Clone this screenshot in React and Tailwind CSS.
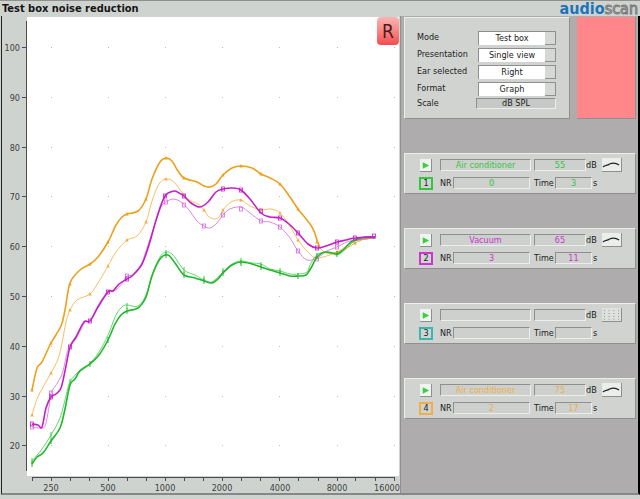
import React, { useState } from 'react';

// --- Chart data (x, y pairs on the plot) ---

const ticksX = [32, 51, 70, 89, 108, 127, 146, 165, 184, 203, 222, 241, 260, 279, 298, 318, 337, 355, 375, 394];
const labelsX = [[51, '250'], [108, '500'], [165, '1000'], [222, '2000'], [280, '4000'], [337, '8000'], [387, '16000']];
const labelsY = [[47, '100'], [97, '90'], [147, '80'], [196, '70'], [246, '60'], [296, '50'], [346, '40'], [396, '30'], [445, '20']];

const curves = [
  {
    name: 'orange-thin', color: '#f2ae3c', width: 1, marker: 'dot',
    points: [[32, 415], [37, 399], [42, 389], [51, 373], [58, 359], [62, 343], [66, 322], [70, 310], [77, 300], [90, 294], [98, 283], [108, 266], [116, 252], [127, 240], [137, 236], [146, 222], [152, 201], [159, 184], [166, 179], [174, 182], [184, 195], [191, 201], [198, 204], [204, 210], [208, 216], [214, 219], [219, 217], [223, 210], [231, 202], [241, 200], [250, 206], [261, 210], [271, 209], [280, 213], [290, 226], [298, 240], [308, 252], [317, 258], [337, 252], [355, 241], [375, 238]],
    marks: [[32, 415], [51, 373], [70, 310], [90, 294], [108, 266], [127, 240], [146, 222], [166, 179], [184, 195], [204, 210], [223, 210], [241, 200], [261, 210], [280, 213], [298, 240], [317, 258], [337, 252]],
  },
  {
    name: 'green-thin', color: '#3ccb4a', width: 1, marker: 'tick',
    points: [[32, 461], [42, 449], [51, 435], [60, 418], [66, 396], [70, 382], [80, 370], [90, 363], [99, 352], [108, 335], [116, 315], [122, 307], [127, 305], [138, 306], [146, 295], [152, 275], [160, 257], [166, 252], [173, 255], [184, 270], [195, 275], [204, 280], [212, 282], [223, 272], [232, 264], [241, 261], [252, 263], [261, 264], [270, 269], [280, 271], [290, 274], [298, 274], [307, 272], [311, 263], [318, 254], [330, 252], [337, 255], [346, 249], [355, 241], [375, 238]],
    marks: [[32, 461], [51, 435], [70, 382], [127, 306], [166, 253], [184, 270], [204, 279], [223, 271], [241, 261], [261, 265], [280, 271]],
  },
  {
    name: 'magenta-thin', color: '#d36adb', width: 1, marker: 'box',
    points: [[32, 427], [40, 428], [45, 426], [49, 407], [51, 393], [58, 382], [63, 371], [67, 353], [70, 347], [77, 337], [85, 322], [90, 321], [99, 304], [108, 291], [114, 291], [120, 286], [127, 276], [133, 275], [141, 265], [146, 251], [154, 227], [161, 207], [166, 202], [173, 199], [181, 202], [189, 210], [197, 221], [204, 226], [210, 228], [217, 223], [223, 215], [230, 209], [241, 207], [250, 213], [261, 221], [270, 222], [280, 227], [290, 238], [298, 251], [307, 260], [317, 258], [327, 251], [337, 247], [347, 242], [355, 240], [375, 238]],
    marks: [[32, 427], [51, 393], [127, 276], [166, 202], [184, 205], [204, 226], [223, 215], [241, 209], [261, 221], [280, 227], [298, 251], [317, 259], [337, 247]],
  },
  {
    name: 'orange', color: '#eda01c', width: 2, marker: 'dot',
    points: [[32, 390], [37, 368], [42, 362], [51, 343], [61, 326], [65, 310], [70, 283], [80, 270], [90, 264], [98, 257], [108, 242], [116, 225], [122, 217], [127, 214], [138, 211], [146, 199], [152, 179], [160, 162], [166, 158], [172, 161], [178, 171], [184, 178], [197, 182], [204, 186], [210, 187], [216, 184], [223, 175], [232, 168], [241, 166], [252, 168], [261, 174], [270, 178], [280, 184], [290, 197], [298, 209], [312, 227], [317, 240], [320, 248]],
    marks: [[32, 390], [51, 343], [70, 284], [90, 264], [108, 242], [127, 214], [146, 199], [166, 158], [184, 178], [223, 175], [241, 166], [261, 174], [280, 184], [298, 209], [317, 242]],
  },
  {
    name: 'orange-tail', color: '#eda01c', width: 1, marker: 'dot',
    points: [[320, 248], [326, 253], [337, 252], [347, 248], [355, 243], [365, 239], [375, 238]],
    marks: [[337, 253], [355, 243]],
  },
  {
    name: 'green', color: '#22b62d', width: 2, marker: 'tick',
    points: [[32, 464], [37, 457], [43, 453], [51, 441], [60, 428], [65, 409], [70, 385], [75, 379], [80, 371], [90, 364], [99, 355], [108, 340], [115, 324], [121, 315], [127, 311], [138, 308], [146, 297], [152, 276], [160, 259], [168, 255], [175, 263], [184, 275], [195, 278], [204, 281], [212, 283], [218, 279], [223, 273], [232, 265], [241, 262], [252, 264], [261, 267], [270, 270], [280, 273], [290, 276], [298, 276], [306, 275], [311, 268], [317, 257], [325, 252], [337, 254], [344, 249], [351, 242], [358, 239], [365, 237], [375, 237]],
    marks: [[32, 464], [51, 441], [90, 364], [108, 340], [127, 311], [166, 255], [184, 275], [204, 281], [223, 273], [241, 263], [261, 267], [280, 273], [298, 276], [317, 256], [337, 254]],
  },
  {
    name: 'magenta', color: '#c31fc9', width: 2, marker: 'box',
    points: [[32, 424], [38, 425], [42, 427], [46, 408], [51, 397], [56, 394], [61, 388], [65, 371], [70, 347], [76, 337], [84, 322], [90, 321], [98, 307], [108, 292], [113, 291], [119, 284], [127, 279], [133, 275], [142, 264], [149, 245], [157, 217], [165, 196], [174, 191], [179, 193], [184, 196], [191, 203], [200, 207], [208, 202], [216, 192], [223, 189], [233, 188], [241, 190], [250, 199], [261, 213], [270, 217], [280, 218], [289, 224], [298, 233], [308, 244], [317, 248], [326, 246], [337, 242], [346, 240], [355, 238], [375, 237]],
    marks: [[32, 424], [51, 397], [70, 347], [90, 321], [108, 292], [127, 279], [165, 196], [184, 196], [223, 189], [241, 190], [261, 211], [280, 218], [298, 233], [317, 248], [337, 242], [355, 238], [374, 236]],
  },
];

// Catmull-Rom spline through the measured points
const smooth = (pts) => {
  let d = `M${pts[0][0]} ${pts[0][1]}`;
  for (let i = 0; i < pts.length - 1; i++) {
    const p0 = pts[i - 1] || pts[i];
    const p1 = pts[i];
    const p2 = pts[i + 1];
    const p3 = pts[i + 2] || p2;
    d += ` C${p1[0] + (p2[0] - p0[0]) / 6} ${p1[1] + (p2[1] - p0[1]) / 6} ${p2[0] - (p3[0] - p1[0]) / 6} ${p2[1] - (p3[1] - p1[1]) / 6} ${p2[0]} ${p2[1]}`;
  }
  return d;
};

const Marker = ({ type, x, y, color }) => {
  if (type === 'tick') return <path d={`M${x} ${y - 3}v6`} stroke={color} strokeWidth="1" />;
  if (type === 'box') return <rect x={x - 1.5} y={y - 2} width="3" height="4" fill="none" stroke={color} strokeWidth="0.8" />;
  return <path d={`M${x - 1.7} ${y + 1.5}L${x} ${y - 2}L${x + 1.7} ${y + 1.5}Z`} fill={color} />;
};

const Chart = () => (
  <svg viewBox="2 16 398 477" className="block w-full" role="img" aria-label="Test box noise reduction">
    <rect x="27" y="17" width="372" height="459" fill="#fff" />
    <path d="M26.5 21V471" stroke="#4a4f4d" />
    <path d="M32 477.5H395" stroke="#4a4f4d" />
    {ticksX.map((x) => <path key={x} d={`M${x + 0.5} 477v4`} stroke="#4a4f4d" />)}
    {labelsY.map(([y]) => <path key={y} d={`M22 ${y + 0.5}h5`} stroke="#4a4f4d" />)}
    {labelsY.map(([y]) =>
      [51, 108, 165, 222, 279, 337, 394].map((x) => (
        <rect key={`${x}-${y}`} x={x} y={y} width="1" height="1" fill="#bdbdbd" />
      ))
    )}
    <g fill="#3b403e" className="text-[9px]">
      {labelsY.map(([y, label]) => <text key={label} x="20" y={y + 4} textAnchor="end">{label}</text>)}
      {labelsX.map(([x, label]) => <text key={label} x={x} y="491" textAnchor="middle">{label}</text>)}
    </g>
    {curves.map((c) => (
      <g key={c.name}>
        <path d={smooth(c.points)} fill="none" stroke={c.color} strokeWidth={c.width === 2 ? 1.6 : 0.8} strokeLinejoin="round" />
        {c.marks.map(([x, y]) => <Marker key={x} type={c.marker} x={x} y={y} color={c.color} />)}
      </g>
    ))}
  </svg>
);

// --- Settings panel ---

const settings = [
  { id: 'mode', label: 'Mode', options: ['Test box', 'On-ear'] },
  { id: 'presentation', label: 'Presentation', options: ['Single view', 'Split view'] },
  { id: 'ear', label: 'Ear selected', options: ['Right', 'Left'] },
  { id: 'format', label: 'Format', options: ['Graph', 'Table'] },
];

const SettingSelect = ({ id, label, options }) => {
  const [value, setValue] = useState(options[0]);
  return (
    <div className="flex h-[17px] items-center justify-between">
      <label htmlFor={id}>{label}</label>
      <div className="flex h-[14px] w-[78px] border-t border-l border-[#8d908e] bg-white">
        <select
          id={id}
          value={value}
          onChange={(e) => setValue(e.target.value)}
          className="min-w-0 flex-1 appearance-none bg-white text-center leading-3"
        >
          {options.map((o) => <option key={o}>{o}</option>)}
        </select>
        <span className="w-[11px] border-r border-b border-[#8d908e] bg-[#d6d8d6]" />
      </div>
    </div>
  );
};

const SettingsPanel = () => (
  <section className="flex h-[102px] min-w-0 flex-1 flex-col border border-t-[#eceeec] border-r-[#8f918f] border-b-[#8f918f] border-l-[#eceeec] bg-[#d0d3d0] pt-[11px] pr-[13px] pl-3">
    {settings.map((s) => <SettingSelect key={s.id} {...s} />)}
    <div className="flex h-3 items-center justify-between">
      <label htmlFor="scale">Scale</label>
      <input
        id="scale"
        readOnly
        value="dB SPL"
        className="h-[11px] w-20 border border-t-[#8d908e] border-r-[#eceeec] border-b-[#eceeec] border-l-[#8d908e] bg-[#c6c9c7] text-center leading-none"
      />
    </div>
  </section>
);

// --- Test slots ---

const slots = [
  { n: 1, name: 'Air conditioner', level: '55', nr: '0', time: '3', text: 'text-[#35c63f]', border: 'border-[#35c63f]' },
  { n: 2, name: 'Vacuum', level: '65', nr: '3', time: '11', text: 'text-[#cb35d2]', border: 'border-[#cb35d2]' },
  { n: 3, name: '', level: '', nr: '', time: '', text: 'text-[#3cb5ae]', border: 'border-[#3cb5ae]' },
  { n: 4, name: 'Air conditioner', level: '75', nr: '2', time: '17', text: 'text-[#efae48]', border: 'border-[#efae48]' },
];

const Field = ({ className, ...props }) => (
  <input
    readOnly
    className={`h-3 min-w-0 border border-t-[#8d908e] border-r-[#eceeec] border-b-[#eceeec] border-l-[#8d908e] bg-[#cdd0cd] text-center leading-none ${className}`}
    {...props}
  />
);

const CurveIcon = () => (
  <svg viewBox="0 0 20 13" className="block h-full w-full">
    <path d="M1 9C4 7 5 8 8 6C12 4 15 5 18 7" fill="none" stroke="#222" strokeWidth="1.3" />
  </svg>
);

const DotsIcon = () => (
  <svg viewBox="0 0 20 13" className="block h-full w-full">
    {[2, 7, 12, 17].map((x) => [2, 5, 8, 11].map((y) => <rect key={`${x}-${y}`} x={x} y={y} width="1" height="1" fill="#888" />))}
  </svg>
);

const Slot = ({ slot }) => {
  const { n, name, level, nr, time, text, border } = slot;
  return (
    <section className="flex h-[41px] flex-col gap-[6px] border border-t-[#eceeec] border-r-[#8f918f] border-b-[#8f918f] border-l-[#eceeec] bg-[#d0d3d0] pt-[5px] pr-[13px] pl-[14px]">
      <div className="flex h-3 items-center">
        <button aria-label={`Run test ${n}`} className="ml-px h-[13px] w-3 border-r border-b border-[#8d908e] bg-[#f1f3f1]">
          <svg viewBox="0 0 12 12" className="block h-full w-full">
            <path d="M3 3L10 6.5L3 10Z" fill="#38cf40" />
          </svg>
        </button>
        <Field className={`ml-2 flex-1 ${text}`} aria-label={`Stimulus ${n}`} value={name} />
        <Field className={`ml-[3px] w-[52px] ${text}`} id={`level-${n}`} value={level} />
        <label htmlFor={`level-${n}`} className="w-4">dB</label>
        <button aria-label={`Toggle curve ${n}`} className={`h-[14px] w-5 border-r border-b border-[#8d908e] ${name ? 'bg-[#eceeec]' : 'bg-[#dfe1df]'}`}>
          {name ? <CurveIcon /> : <DotsIcon />}
        </button>
      </div>
      <div className="flex h-3 items-center">
        <button className={`flex h-[13px] w-[14px] items-center justify-center border-2 ${border}`}>{n}</button>
        <label htmlFor={`nr-${n}`} className="ml-[7px] w-[13px]">NR</label>
        <Field className={`flex-1 ${text}`} id={`nr-${n}`} value={nr} />
        <label htmlFor={`time-${n}`} className="ml-1 w-[21px]">Time</label>
        <Field className={`w-[37px] ${text}`} id={`time-${n}`} value={time} />
        <span className="w-[30px] pl-px">s</span>
      </div>
    </section>
  );
};

const Header = () => (
  <header className="flex h-4 items-center justify-between border-t border-[#8f918f] pr-0.5 pl-0.5">
    <h1 className="text-[11px] leading-none font-bold text-[#151515]">Test box noise reduction</h1>
    <a href="#audioscan" className="text-[16px] leading-none font-bold text-[#1e74b8]">
      audio<span className="font-normal text-[#e4e6e4] [-webkit-text-stroke:1px_#777]">scan</span>
    </a>
  </header>
);

const App = () => (
  <div className="flex min-h-screen flex-col bg-[#cfd3d0] font-['DejaVu_Sans_Condensed','DejaVu_Sans',sans-serif] text-[9px] leading-none text-[#222]">
    <Header />
    <main className="mb-1 ml-px grid flex-1 grid-cols-[minmax(0,398fr)_minmax(0,238fr)] border-r-2 border-b-2 border-l border-r-black border-b-[#858886] border-l-[#222]">
      <div className="relative">
        <Chart />
        <button
          aria-label="Right ear"
          className="absolute top-px right-px h-7 w-[22px] rounded-sm bg-linear-to-b from-[#f7b5b5] to-[#f4484f] text-[19px] leading-none text-[#4a1d1d]"
        >
          R
        </button>
      </div>
      <aside className="flex flex-col gap-[34px] border-l border-[#8f918f] bg-[#afacae] pt-px pr-0.5 pl-[3px]">
        <div className="flex gap-[7px]">
          <SettingsPanel />
          <div className="w-[59px] border-r border-b border-[#8f918f] bg-[#ff878a]" />
        </div>
        {slots.map((slot) => <Slot key={slot.n} slot={slot} />)}
      </aside>
    </main>
  </div>
);

export default App;
